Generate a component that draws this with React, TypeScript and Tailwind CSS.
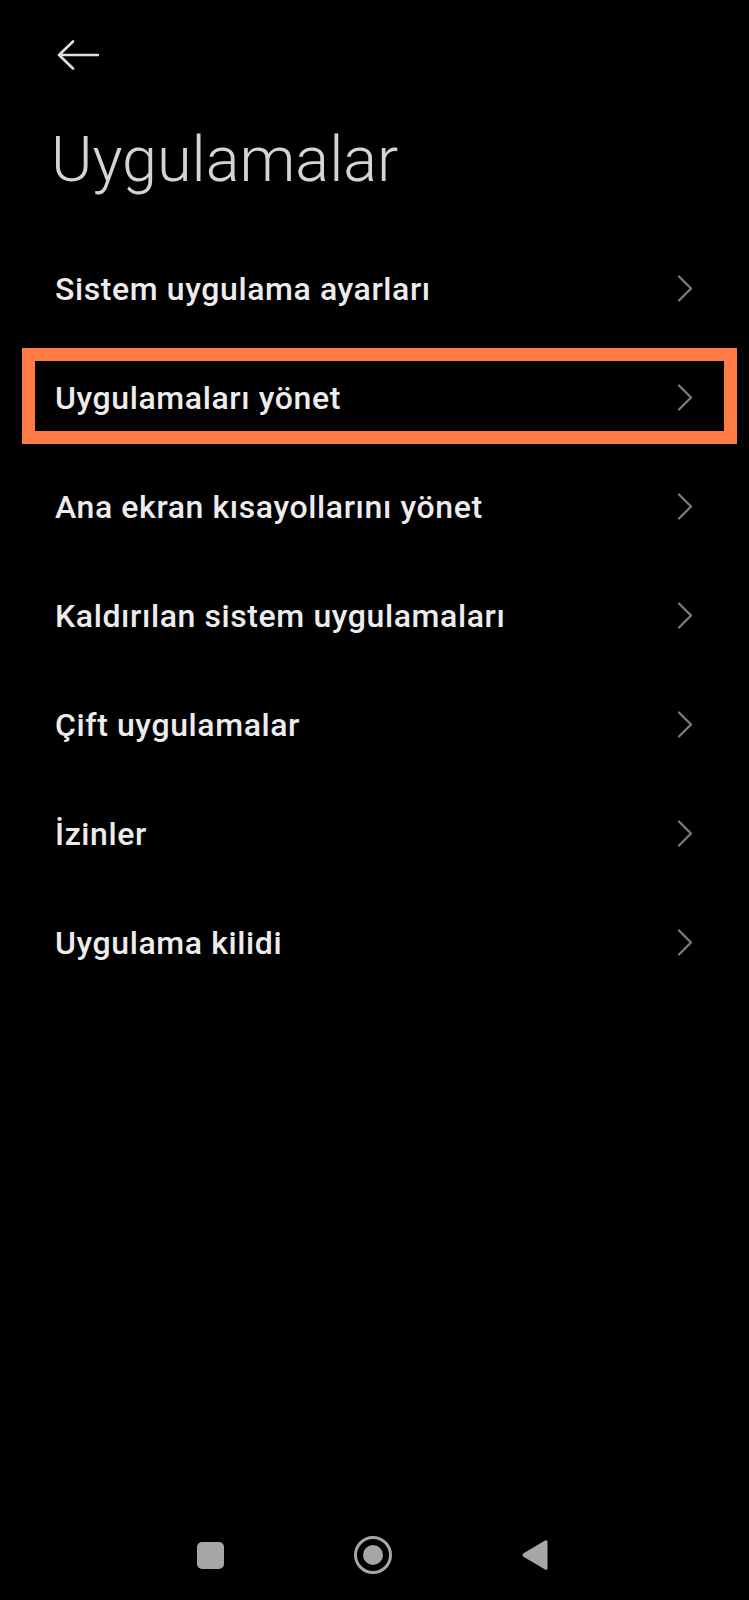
import { useState } from "react";

const items = [
  "Sistem uygulama ayarları",
  "Uygulamaları yönet",
  "Ana ekran kısayollarını yönet",
  "Kaldırılan sistem uygulamaları",
  "Çift uygulamalar",
  "İzinler",
  "Uygulama kilidi",
];

function Chevron() {
  return (
    <svg width="16" height="27" viewBox="0 0 16 27" fill="none" className="shrink-0">
      <path d="M2 1.5 L14 13.5 L2 25.5" stroke="#7d7d7d" strokeWidth="2.2" strokeLinecap="round" strokeLinejoin="round" />
    </svg>
  );
}

export default function App() {
  // highlighted row (the orange frame in the screenshot)
  const [active] = useState(1);

  return (
    <div
      className="flex h-[1600px] w-full flex-col bg-black"
      style={{ fontFamily: "Roboto, 'Noto Sans', sans-serif" }}
    >
      {/* Back arrow */}
      <div className="pl-[57px] pt-[40px]">
        <svg width="42" height="30" viewBox="0 0 42 30" fill="none">
          <path
            d="M2 15 H41 M16 1.5 L2 15 L16 28.5"
            stroke="#dedede"
            strokeWidth="2.6"
            strokeLinecap="round"
            strokeLinejoin="round"
          />
        </svg>
      </div>

      {/* Title */}
      <h1 className="mt-[52px] pl-[51px] text-[63px] font-light leading-[76px] text-[#d4d4d4]">
        Uygulamalar
      </h1>

      {/* List */}
      <ul className="mt-[36px]">
        {items.map((label, i) => (
          <li key={label} className="relative flex h-[109px] items-center justify-between pl-[55px] pr-[56px]">
            <span className="text-[32px] font-medium leading-[38px] tracking-[0.6px] text-[#ececec]">{label}</span>
            <Chevron />
            {i === active && (
              <div className="pointer-events-none absolute bottom-[8px] left-[22px] right-[12px] top-[5px] border-[13px] border-[#ff7b45]" />
            )}
          </li>
        ))}
      </ul>

      {/* Navigation bar */}
      <div className="mt-auto flex h-[90px] items-center justify-center gap-[122px] pr-[4px]">
        <div className="flex w-[40px] justify-center">
          <div className="h-[27px] w-[27px] rounded-[5px] bg-[#a6a6a6]" />
        </div>
        <div className="flex w-[40px] justify-center">
          <div className="flex h-[38px] w-[38px] items-center justify-center rounded-full border-[3px] border-[#a6a6a6]">
            <div className="h-[20px] w-[20px] rounded-full bg-[#a6a6a6]" />
          </div>
        </div>
        <div className="flex w-[40px] justify-center">
          <svg width="28" height="32" viewBox="0 0 28 32">
            <path
              d="M2.5 14.2 L24 1.5 Q26.5 0.3 26.5 3 V29 Q26.5 31.7 24 30.5 L2.5 17.8 Q0.5 16 2.5 14.2 Z"
              fill="#a6a6a6"
            />
          </svg>
        </div>
      </div>
    </div>
  );
}
